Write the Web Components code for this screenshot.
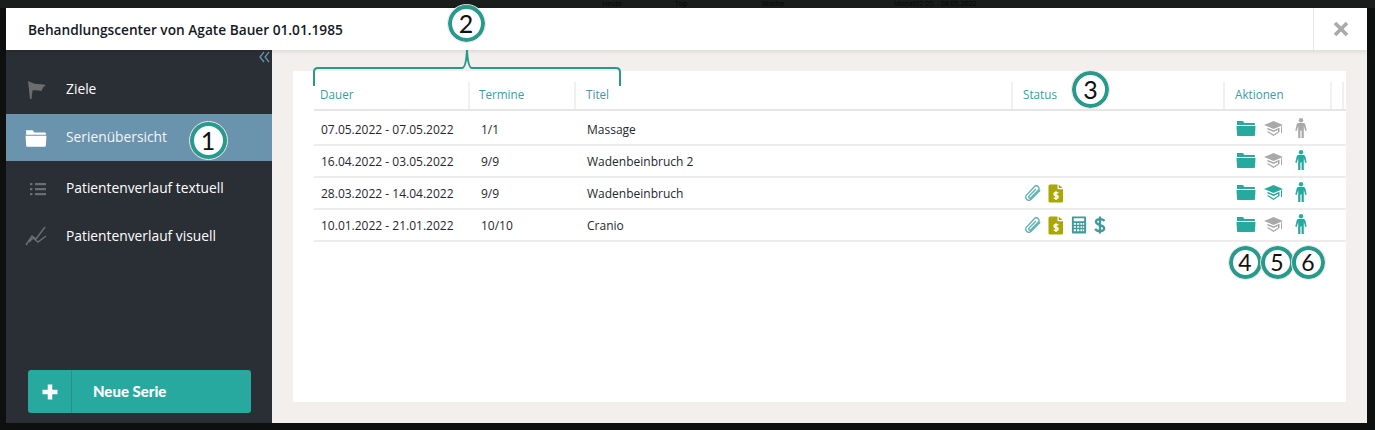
<!DOCTYPE html>
<html lang="de">
<head>
<meta charset="UTF-8">
<title>Behandlungscenter</title>
<style>
html,body{margin:0;height:100%;background:#0e0f0f;overflow:hidden}
body{font-family:"Open Sans","Liberation Sans",sans-serif;padding:8px 8px 7px 6px;box-sizing:border-box;height:430px;width:1375px}
</style>
</head>
<body>
<template id="ic-folder"><svg width="20" height="16" viewBox="0 0 20 16"><path fill="currentColor" d="M1 1h6l1.500 2H18a1 1 0 0 1 1 1V5H1zM.5 6h19L19 14.800a1.200 1.200 0 0 1-1.200 1.200H2.200A1.200 1.200 0 0 1 1 14.800z"/></svg></template>
<template id="ic-cap"><svg width="19" height="15" viewBox="0 0 19 15"><path fill="currentColor" d="M9.500 0 19 4 9.500 8 0 4zM3.500 6.800 9.500 9.300 15.500 6.800V11L9.500 15 3.500 11V9.800L9.500 13.500 14 10.800V9L9.500 11 3.500 8.400z"/><path fill="currentColor" d="M17 5.200h1v6.800h-1z"/></svg></template>
<template id="ic-person"><svg width="12" height="20" viewBox="0 0 12 20"><circle cx="6" cy="2.200" r="2.200" fill="currentColor"/><path fill="currentColor" d="M3.400 5h5.200a1.700 1.700 0 0 1 1.700 1.500l1.400 6-1.400.4-1.500-4.800V20H6.600v-7.500H5.400V20H3.200V8.100L1.700 12.900.3 12.500l1.400-6A1.700 1.700 0 0 1 3.400 5z"/></svg></template>
<template id="ic-clip"><svg width="17" height="18" viewBox="0 0 17 18"><path fill="none" stroke="currentColor" stroke-width="1.400" stroke-linecap="round" d="M15.800 6.500 7.200 15.300a3 3 0 0 1-4.600-.1 3.200 3.200 0 0 1 0-4.300L10.500 2.400a2.700 2.700 0 0 1 3.800 3.800L6.800 13.800a1.200 1.200 0 0 1-1.700-1.700L11.500 5.400"/></svg></template>
<template id="ic-bill"><svg width="16" height="19" viewBox="0 0 16 19"><path fill="#a8a800" d="M2 .5h7.500V5.300h5.500V17a1.500 1.500 0 0 1-1.500 1.500H2A1.500 1.500 0 0 1 .5 17V2A1.500 1.500 0 0 1 2 .5zM10.700.8 14.700 4h-4z"/><path fill="none" stroke="#fff" stroke-width="1.500" d="M10.300 8.700H7.400a1.300 1.300 0 0 0 0 2.800h1.300a1.300 1.300 0 0 1 0 2.800H5.700M8 7.200v8.700"/></svg></template>
<template id="ic-calc"><svg width="16" height="18" viewBox="0 0 16 19"><path fill="#3f9a9a" fill-rule="evenodd" d="M1.500.5h13a1 1 0 0 1 1 1v16a1 1 0 0 1-1 1h-13a1 1 0 0 1-1-1v-16a1 1 0 0 1 1-1zM2.500 2.500v3h11v-3zM2.500 7.500v1.800h2.300V7.500zM6 7.500v1.800h2.300V7.500zM9.500 7.500v1.800h1.800V7.500zM12 7.500v1.800h1.500V7.500zM2.500 10.700v1.800h2.300v-1.800zM6 10.700v1.800h2.300v-1.800zM9.500 10.700v1.800h1.800v-1.800zM12 10.700v1.800h1.500v-1.800zM2.500 14v2h2.300v-2zM6 14v2h2.300v-2zM9.500 14v2h1.800v-2zM12 14v2h1.500v-2z"/></svg></template>
<template id="ic-dollar"><svg width="12" height="18" viewBox="0 0 12 19"><path fill="none" stroke="#3f9a9a" stroke-width="2.400" d="M10.500 5.300C10 3.800 8 3.200 6 3.200 3.500 3.200 1.700 4.300 1.700 6.200c0 4.300 8.700 2.400 8.700 6.800 0 2-2 3-4.400 3-2.300 0-4.300-.8-5-2.500M6 .5v18"/></svg></template>

<script>
// small helper so each element keeps its style next to its markup
function shadow(el, html){
  const root = el.attachShadow({mode:'open'})
  root.innerHTML = html
  return root
}
function icon(name){
  return document.getElementById('ic-'+name).innerHTML
}

class AppIcon extends HTMLElement{
  connectedCallback(){
    shadow(this, `<style>:host{display:inline-flex;align-items:center;justify-content:center;line-height:0}</style>`+icon(this.getAttribute('name')))
  }
}
customElements.define('app-icon', AppIcon)

// the dimmed app bar that peeks out above the modal
class BackDrop extends HTMLElement{
  connectedCallback(){
    shadow(this, `<style>
      :host{position:absolute;left:0;top:0;width:1375px;height:8px;background:#1b1c1c;display:flex;padding-left:602px;box-sizing:border-box;
        font:7px/8px "Open Sans",sans-serif;color:#060606}
      span:nth-child(1){width:93px}span:nth-child(2){width:73px}span:nth-child(3){width:87px}span:nth-child(4){width:132px}
    </style><span>Heute</span><span>Top</span><span>Woche</span><span>Monat</span><span>02.05. - 08.05.2022</span>`)
  }
}
customElements.define('back-drop', BackDrop)

// numbered callout laid over the screenshot
class CallOut extends HTMLElement{
  connectedCallback(){
    shadow(this, `<style>
      :host{position:absolute;z-index:3;left:var(--x);top:var(--y);width:var(--s,37px);height:var(--s,37px);box-sizing:border-box;border-radius:50%;
        background:#fff;border:4.500px solid #269a8c;outline:1.500px solid #ece6dc;display:flex;align-items:center;justify-content:center;
        font:var(--f,25px)/1 "Lato","Open Sans",sans-serif;color:#111}
    </style><slot></slot>`)
  }
}
customElements.define('call-out', CallOut)

class ModalHeader extends HTMLElement{
  connectedCallback(){
    shadow(this, `<style>
      :host{display:flex;height:42px;flex:none;background:#fff;box-shadow:0 1px 5px rgba(0,0,0,.12);position:relative;z-index:1}
      .t{flex:1;padding:0 22px;display:flex;align-items:center;font:600 13.700px "Open Sans",sans-serif;color:#15191f}
      .x{width:53px;border-left:1px solid #e8e8e8;display:flex;align-items:center;justify-content:center}
    </style>
    <div class="t"><slot></slot></div>
    <div class="x"><svg width="16" height="16" viewBox="0 0 16 16"><path d="M2 2l12 12M14 2 2 14" stroke="#a9a9a9" stroke-width="3.600"/></svg></div>`)
  }
}
customElements.define('modal-header', ModalHeader)

class SideItem extends HTMLElement{
  connectedCallback(){
    shadow(this, `<style>
      :host{display:flex;height:48px;align-items:center;color:#fff;font:500 13.800px "Open Sans",sans-serif;box-sizing:border-box}
      :host([active]){background:#6a93ae;color:#f3f6f8;height:47px;margin-bottom:1px}
      .i{width:60px;display:flex;justify-content:center;color:#6b6d6f}
      :host([active]) .i{color:#fff}
      .l{transform:translateY(var(--dy,0))}
    </style><div class="i"><slot name="icon"></slot></div><div class="l"><slot></slot></div>`)
  }
}
customElements.define('side-item', SideItem)

class SideBar extends HTMLElement{
  connectedCallback(){
    shadow(this, `<style>
      :host{display:flex;flex-direction:column;width:266px;flex:none;background:#2a2e35;box-sizing:border-box}
      .c{height:16px;display:flex;justify-content:flex-end;padding:1px 2px 0 0;box-sizing:border-box;color:#6a93ae;font:16px/14px "Open Sans",sans-serif}
      .n{flex:1}
      .b{margin:0 21px 10px 22px;height:43px;background:#28a99f;border-radius:3px;display:flex;color:#fff;
         font:900 15px "Lato","Open Sans",sans-serif}
      .p{width:43px;border-right:1px solid #229389;display:flex;align-items:center;justify-content:center}
      .l{padding:0 0 2px 21px;display:flex;align-items:center}
    </style>
    <div class="c"><svg width="11" height="12" viewBox="0 0 11 12"><path d="M5 1 1 6l4 5M10 1 6 6l4 5" fill="none" stroke="currentColor" stroke-width="1.300"/></svg></div>
    <div class="n"><slot></slot></div>
    <div class="b"><div class="p"><svg width="16" height="16" viewBox="0 0 16 16"><path d="M8 .5v15M.5 8h15" stroke="#fff" stroke-width="4.500"/></svg></div><div class="l">Neue Serie</div></div>`)
  }
}
customElements.define('side-bar', SideBar)

const COLS = '156px 106px 437px 212px 107px 10px 1fr'

class SerienHead extends HTMLElement{
  connectedCallback(){
    shadow(this, `<style>
      :host{display:grid;grid-template-columns:${COLS};height:38px;margin-left:21px;border-bottom:2px solid #e6e6e6;
        font:11.700px "Open Sans",sans-serif;color:#3c9c9f}
      div{margin-top:11px;display:flex;align-items:center;padding:0 0 3px 10px;border-right:2px solid #f0f0f0;box-sizing:border-box}
      div:last-child{border:0;padding:0}
    </style>
    <div style="padding-left:6px">Dauer</div><div style="padding-left:9px">Termine</div><div>Titel</div><div>Status</div><div>Aktionen</div><div></div><div></div>`)
  }
}
customElements.define('serien-head', SerienHead)

class SerienRow extends HTMLElement{
  connectedCallback(){
    const a = n => this.getAttribute(n) || ''
    const flag = n => a(n) === 'on' ? '#28a99f' : '#a9a9a9'
    shadow(this, `<style>
      :host{display:grid;grid-template-columns:${COLS};height:30px;margin-left:21px;border-bottom:2px solid #ececec;
        font:12px "Open Sans",sans-serif;color:#23282e;align-items:center}
      :host(:first-of-type){margin-top:3px}
      .d{padding-left:7px}.m{padding-left:11px}.s{display:flex;gap:7px;align-items:center;padding-left:11px}
      .a{display:flex;align-items:center;padding-left:11px;margin-top:-2px}
      .a app-icon:nth-child(1){width:20px;color:#28a99f}
      .a app-icon:nth-child(2){width:19px;margin-left:8px}
      .a app-icon:nth-child(3){width:12px;margin-left:12px}
    </style>
    <div class="d">${a('dauer')}</div><div class="m">${a('termine')}</div><div class="m">${a('titel')}</div>
    <div class="s"><slot></slot></div>
    <div class="a"><app-icon name="folder"></app-icon><app-icon name="cap" style="color:${flag('cap')}"></app-icon><app-icon name="person" style="color:${flag('person')}"></app-icon></div>`)
  }
}
customElements.define('serien-row', SerienRow)

class SerienPanel extends HTMLElement{
  connectedCallback(){
    shadow(this, `<style>
      :host{display:block;flex:1;min-width:0;margin:21px;background:#fff}
    </style><slot></slot>`)
  }
}
customElements.define('serien-panel', SerienPanel)

class BehandlungsModal extends HTMLElement{
  connectedCallback(){
    shadow(this, `<style>
      :host{display:flex;flex-direction:column;width:1361px;height:415px;position:relative}
      .body{display:flex;flex:1;min-height:0;background:#f3efec}
    </style>
    <slot name="header"></slot>
    <div class="body"><slot name="side"></slot><slot></slot></div>
    <slot name="over"></slot>`)
  }
}
customElements.define('behandlungs-modal', BehandlungsModal)
</script>

<back-drop></back-drop>
<behandlungs-modal>
  <modal-header slot="header">Behandlungscenter von Agate Bauer 01.01.1985</modal-header>
  <side-bar slot="side">
    <side-item style="--dy:-2px">
      <svg slot="icon" style="margin-left:2px" width="18" height="18" viewBox="0 0 18 18"><path fill="currentColor" d="M0 0C3 1 6 3 9 3 12 3 15 3.500 18 4 15.500 5.500 14 8 13.500 10 11 9.500 8 9 4.500 9.500L3.500 18H2z"/></svg>
      Ziele</side-item>
    <side-item active style="--dy:-1px"><svg slot="icon" width="22" height="18" viewBox="0 0 20 16"><path fill="currentColor" d="M1 1h6l1.500 2H18a1 1 0 0 1 1 1V5H1zM.5 6h19L19 14.800a1.200 1.200 0 0 1-1.200 1.200H2.200A1.200 1.200 0 0 1 1 14.800z"/></svg>Serienübersicht</side-item>
    <side-item style="--dy:1px"><svg slot="icon" style="margin:5px 0 0 4px" width="16" height="14" viewBox="0 0 16 14"><path fill="currentColor" d="M0 1h2.400v2.200H0zM5 1h11v2.200H5zM0 6h2.400v2.200H0zM5 6h11v2.200H5zM0 11h2.400v2.200H0zM5 11h11v2.200H5z"/></svg>Patientenverlauf textuell</side-item>
    <side-item style="--dy:1px"><svg slot="icon" style="margin-top:4px" width="22" height="20" viewBox="0 0 22 20"><path fill="none" stroke="currentColor" stroke-width="1.500" d="M1 19 7 10l4 3 9-12M4 16l4-4 5 4 8-6"/></svg>Patientenverlauf visuell</side-item>
  </side-bar>
  <serien-panel>
    <serien-head></serien-head>
    <serien-row dauer="07.05.2022 - 07.05.2022" termine="1/1" titel="Massage"></serien-row>
    <serien-row dauer="16.04.2022 - 03.05.2022" termine="9/9" titel="Wadenbeinbruch 2" person="on"></serien-row>
    <serien-row dauer="28.03.2022 - 14.04.2022" termine="9/9" titel="Wadenbeinbruch" cap="on" person="on">
      <app-icon name="clip" style="color:#62b3b3"></app-icon><app-icon name="bill"></app-icon>
    </serien-row>
    <serien-row dauer="10.01.2022 - 21.01.2022" termine="10/10" titel="Cranio" person="on">
      <app-icon name="clip" style="color:#62b3b3"></app-icon><app-icon name="bill"></app-icon><app-icon name="calc"></app-icon><app-icon name="dollar"></app-icon>
    </serien-row>
  </serien-panel>
  <svg slot="over" style="position:absolute;z-index:2;left:306px;top:40px" width="312" height="40" viewBox="0 0 312 40"><path fill="none" stroke="#269a8c" stroke-width="2" d="M2 38V24q0-4 4-4h144q4 0 5-18 1 18 5 18h144q4 0 4 4v14"/></svg>
  <call-out slot="over" style="--x:183.500px;--y:113.500px">1</call-out>
  <call-out slot="over" style="--x:441.500px;--y:-3px">2</call-out>
  <call-out slot="over" style="--x:1066px;--y:62.500px">3</call-out>
  <call-out slot="over" style="--s:33px;--f:23px;--x:1222.500px;--y:237.500px">4</call-out>
  <call-out slot="over" style="--s:33px;--f:23px;--x:1254.500px;--y:237.500px">5</call-out>
  <call-out slot="over" style="--s:33px;--f:23px;--x:1285.500px;--y:237.500px">6</call-out>
</behandlungs-modal>
</body>
</html>
